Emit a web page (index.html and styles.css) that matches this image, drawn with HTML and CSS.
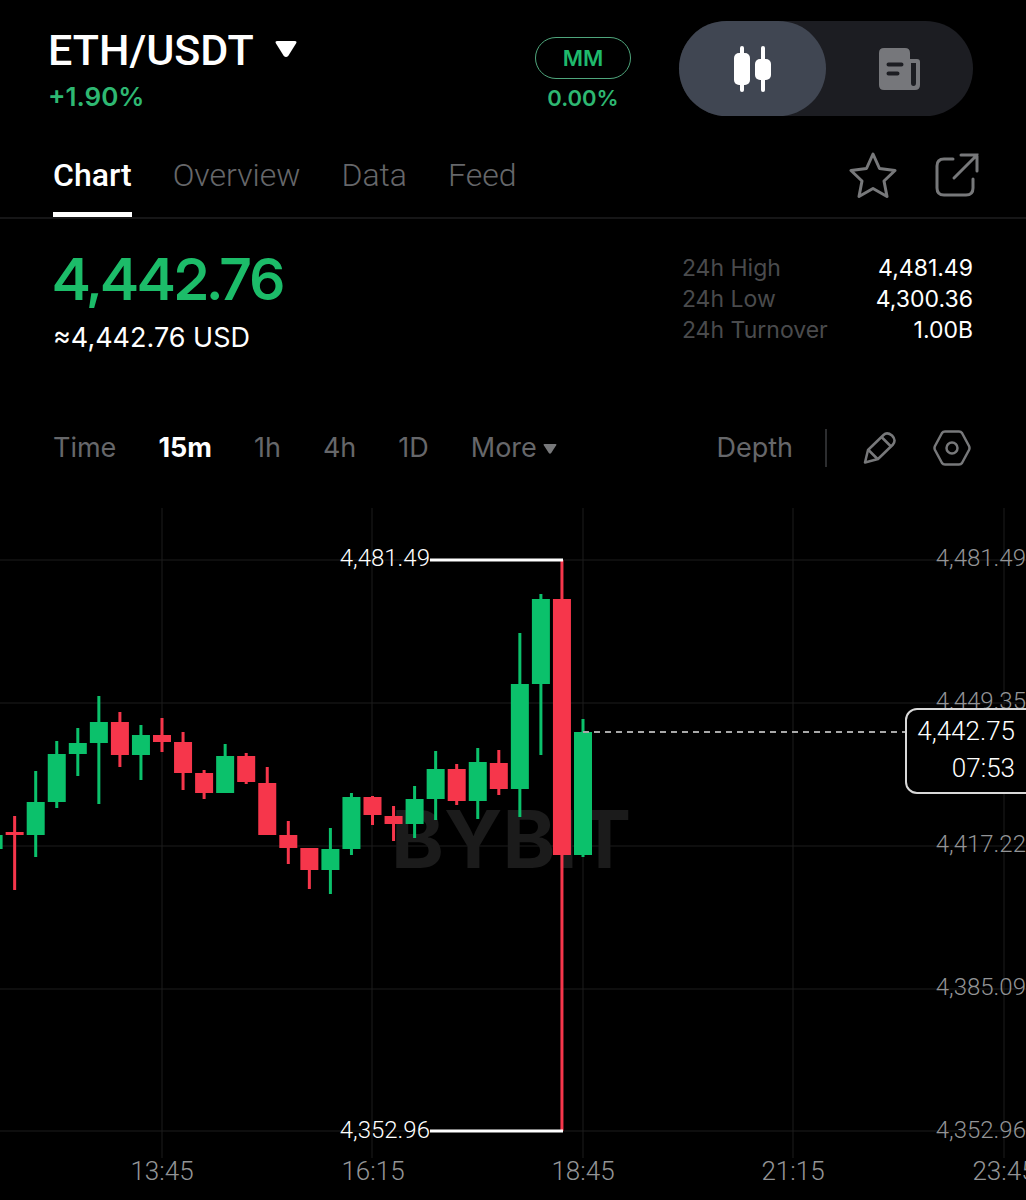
FILE: index.html
```
<!DOCTYPE html>
<html lang="en">

<head>
    <meta charset="UTF-8">
    <meta name="viewport" content="width=device-width, initial-scale=1.0">
    <title>ETH/USDT</title>
    <link rel="stylesheet" href="styles.css">
</head>

<body>
    <header class="top">
        <div class="pair">
            <button class="pair-name">ETH/USDT
                <svg width="22" height="20" viewBox="0 0 22 20"><path d="M2.500 1h17q3 0 1.500 2.500l-7.500 12q-2.500 3-5 0L1 3.500Q-.5 1 2.500 1z" fill="#fff"/></svg>
            </button>
            <div class="pair-change">+1.90%</div>
        </div>
        <div class="margin">
            <button class="mm">MM</button>
            <div class="mm-rate">0.00%</div>
        </div>
        <div class="switch">
            <button class="switch-item active" aria-label="Chart view">
                <svg width="38" height="46" viewBox="0 0 38 46" fill="#fff">
                    <rect x="6" y="0" width="4" height="46" rx="2"/>
                    <rect x="0" y="7" width="16" height="32" rx="5"/>
                    <rect x="27" y="0" width="4" height="46" rx="2"/>
                    <rect x="21" y="13" width="16" height="21" rx="5"/>
                </svg>
            </button>
            <button class="switch-item" aria-label="Order view">
                <svg width="42" height="44" viewBox="0 0 42 44">
                    <path d="M5 1h21q5 0 5 5v6h7q3 0 3 3v23q0 5-5 5H5q-5 0-5-5V6q0-5 5-5z" fill="#76777b"/>
                    <path d="M32 16h5v20q0 3-2.500 3T32 36z" fill="#1c1d22"/>
                    <path d="M9.500 17.500h13M9.500 26.500h9" stroke="#1c1d22" stroke-width="4" stroke-linecap="round"/>
                </svg>
            </button>
        </div>
    </header>

    <div class="tabs">
        <nav class="tabs-list">
            <a class="tab active" href="#chart">Chart</a>
            <a class="tab" href="#overview">Overview</a>
            <a class="tab" href="#data">Data</a>
            <a class="tab" href="#feed">Feed</a>
        </nav>
        <div class="tabs-icons">
            <button class="icon" aria-label="Favourite">
                <svg width="48" height="48" viewBox="0 0 48 48" fill="none" stroke="#77787a" stroke-width="3" stroke-linejoin="round">
                    <path d="M24 3l6.500 14.500 15.500 2-11 10.500 3 15.500L24 37.500 10 45.500l3-15.500L2 19.500l15.500-2z"/>
                </svg>
            </button>
            <button class="icon" aria-label="Share">
                <svg width="48" height="48" viewBox="0 0 48 48" fill="none" stroke="#77787a" stroke-width="3" stroke-linecap="round">
                    <path d="M20 8h-9q-7 0-7 7v22q0 7 7 7h22q7 0 7-7V28"/>
                    <path d="M28 4h16v16M44 4L21 27"/>
                </svg>
            </button>
        </div>
    </div>

    <section class="summary">
        <div>
            <div class="price">4,442.76</div>
            <div class="usd">≈4,442.76 USD</div>
        </div>
        <dl class="stats">
            <dt>24h High</dt>
            <dd>4,481.49</dd>
            <dt>24h Low</dt>
            <dd>4,300.36</dd>
            <dt>24h Turnover</dt>
            <dd>1.00B</dd>
        </dl>
    </section>

    <div class="tools">
        <div class="periods">
            <button class="period">Time</button>
            <button class="period active">15m</button>
            <button class="period">1h</button>
            <button class="period">4h</button>
            <button class="period">1D</button>
            <button class="period more">More
                <svg width="14" height="12" viewBox="0 0 14 12"><path d="M1.500 2h11q1.500 0 .7 1.300L8.200 11q-1.200 1.600-2.400 0L.8 3.300Q0 2 1.500 2z" fill="#77787a"/></svg>
            </button>
        </div>
        <div class="tools-right">
            <button class="period depth">Depth</button>
            <button class="icon" aria-label="Draw">
                <svg width="34" height="34" viewBox="0 0 34 34" fill="none" stroke="#77787a" stroke-width="2.500" stroke-linejoin="round">
                    <path d="M2 31.500L5 19 20.500 4Q24 0.500 29 4.500 33.500 9 30 13.500L15 28z"/>
                    <path d="M5.500 19l9 9M18.500 6l9.500 9.500"/>
                </svg>
            </button>
            <button class="icon" aria-label="Settings">
                <svg width="38" height="36" viewBox="0 0 38 36" fill="none" stroke="#77787a" stroke-width="2.500" stroke-linejoin="round">
                    <path d="M12 1.500h14q2 0 3 1.500l7 13q1 2 0 4l-7 13q-1 1.500-3 1.500H12q-2 0-3-1.500L2 20q-1-2 0-4L9 3q1-1.500 3-1.500z"/>
                    <circle cx="19" cy="18" r="5.500"/>
                </svg>
            </button>
        </div>
    </div>

    <svg class="chart" viewBox="0 500 1026 700" role="img" aria-label="ETH/USDT 15m candles">
        <g class="grid">
            <path d="M0 560h1026M0 703h1026M0 846h1026M0 989h1026M0 1131h1026"/>
            <path d="M162 508v650M372 508v650M583 508v650M793 508v650M1004 508v650"/>
        </g>
        <text class="watermark" x="391" y="868">BYBIT</text>
        <g class="candles"></g>
        <g class="extremes">
            <path d="M430 560h133M430 1131h133"/>
            <text x="430" y="566">4,481.49</text>
            <text x="430" y="1138">4,352.96</text>
        </g>
        <g class="prices">
            <text x="1026" y="566">4,481.49</text>
            <text x="1026" y="709">4,449.35</text>
            <text x="1026" y="852">4,417.22</text>
            <text x="1026" y="995">4,385.09</text>
            <text x="1026" y="1138">4,352.96</text>
        </g>
        <g class="times">
            <text x="162" y="1180">13:45</text>
            <text x="373" y="1180">16:15</text>
            <text x="583" y="1180">18:45</text>
            <text x="793" y="1180">21:15</text>
            <text x="1004" y="1180">23:45</text>
        </g>
        <g class="current">
            <path class="dash" d="M583 732h322"/>
            <rect x="906" y="709" width="140" height="84" rx="11"/>
            <text x="1015" y="740">4,442.75</text>
            <text x="1015" y="777">07:53</text>
        </g>
    </svg>

    <script src="chart.js"></script>
</body>

</html>
```

FILE: styles.css
```
body {
    margin: 0;
    background-color: #000;
    color: #fff;
    font-family: Inter, "Liberation Sans", sans-serif;
}

button {
    display: flex;
    align-items: center;
    justify-content: center;
    margin: 0;
    padding: 0;
    border: 0;
    background: none;
    color: inherit;
    font: inherit;
    cursor: pointer;
}

svg {
    display: block;
}

.top {
    display: flex;
    align-items: flex-start;
    padding: 21px 53px 0 48px;
}

.pair {
    flex: 1;
}

.pair-name {
    gap: 21px;
    font-family: Roboto, sans-serif;
    font-size: 43px;
    font-weight: 500;
    line-height: 58px;
}

.pair-change {
    color: #2eb872;
    font-size: 26px;
    font-weight: 600;
    line-height: 36px;
}

.margin {
    display: flex;
    flex-direction: column;
    align-items: center;
    margin-right: 48px;
    padding-top: 16px;
}

.mm {
    box-sizing: border-box;
    width: 96px;
    height: 42px;
    border: 1px solid #4fa67c;
    border-radius: 21px;
    color: #1fb96c;
    font-size: 22px;
    font-weight: 600;
}

.mm-rate {
    color: #2eb872;
    font-size: 22px;
    font-weight: 600;
    line-height: 38px;
}

.switch {
    display: flex;
    border-radius: 48px;
    background-color: #1c1d22;
}

.switch-item {
    width: 147px;
    height: 95px;
    border-radius: 48px;
}

.switch-item.active {
    background-color: #404652;
}

.tabs {
    display: flex;
    justify-content: space-between;
    padding: 34px 45px 0 53px;
    border-bottom: 2px solid #161617;
}

.tabs-list {
    display: flex;
    gap: 41px;
}

.tab {
    height: 61px;
    border-bottom: 5px solid transparent;
    color: #66676a;
    font-family: Roboto, sans-serif;
    font-size: 32px;
    font-weight: 300;
    line-height: 48px;
    text-decoration: none;
}

.tab.active {
    border-color: #fff;
    color: #fff;
    font-weight: 500;
}

.tabs-icons {
    display: flex;
    align-items: flex-start;
    gap: 36px;
}

.summary {
    display: flex;
    align-items: flex-start;
    justify-content: space-between;
    padding: 31px 53px 0;
}

.price {
    color: #1cbc69;
    font-family: "Inter Display", Inter, sans-serif;
    font-size: 57px;
    font-weight: 600;
    line-height: 60px;
}

.usd {
    font-size: 27px;
    line-height: 56px;
}

.stats {
    display: grid;
    grid-template-columns: auto auto;
    column-gap: 48px;
    margin: 3px 0 0;
    font-size: 23px;
    line-height: 31px;
}

.stats dt {
    color: #4a4b4d;
}

.stats dd {
    margin: 0;
    text-align: right;
}

.tools {
    display: flex;
    justify-content: space-between;
    padding: 63px 55px 33px 53px;
}

.periods,
.tools-right {
    display: flex;
    align-items: center;
    gap: 42px;
}

.tools-right {
    gap: 36px;
}

.period {
    color: #66676a;
    font-size: 27px;
    line-height: 38px;
}

.period.active {
    color: #fff;
    font-weight: 700;
}

.more {
    gap: 6px;
}

.depth {
    padding-right: 32px;
    border-right: 2px solid #2c2d2f;
}

.chart {
    width: 100%;
    height: auto;
    font-family: Roboto, sans-serif;
    font-size: 24px;
    font-weight: 300;
}

.grid path {
    stroke: #1c1c1d;
    stroke-width: 1;
}

.watermark {
    fill: #1b1b1b;
    font-family: Inter, sans-serif;
    font-size: 80px;
    font-weight: 700;
}

.up {
    fill: #0bc16b;
}

.down {
    fill: #f6364b;
}

.extremes,
.prices,
.current {
    text-anchor: end;
}

.extremes path {
    stroke: #fff;
    stroke-width: 3;
}

.extremes text,
.current text {
    fill: #fff;
}

.prices,
.times {
    fill: #939496;
}

.times {
    font-size: 26px;
    text-anchor: middle;
}

.current rect {
    fill: #000;
    stroke: #d8d8d8;
    stroke-width: 2;
}

.current text {
    font-size: 26px;
}

.dash {
    stroke: #a8a8a8;
    stroke-width: 2;
    stroke-dasharray: 6 5;
}
```

FILE: chart.js
```
// high, body top, body bottom, low, direction
let candles = [
    [835, 835, 849, 849, 'up'],
    [816, 832, 835, 890, 'down'],
    [771, 802, 835, 857, 'up'],
    [741, 754, 802, 808, 'up'],
    [728, 743, 754, 776, 'up'],
    [696, 722, 743, 804, 'up'],
    [712, 722, 755, 767, 'down'],
    [725, 735, 755, 780, 'up'],
    [718, 735, 742, 752, 'down'],
    [732, 742, 773, 790, 'down'],
    [770, 773, 793, 799, 'down'],
    [744, 756, 793, 793, 'up'],
    [753, 756, 782, 784, 'down'],
    [767, 783, 835, 835, 'down'],
    [821, 835, 848, 864, 'down'],
    [848, 848, 870, 889, 'down'],
    [828, 849, 870, 894, 'up'],
    [793, 797, 849, 855, 'up'],
    [796, 797, 815, 825, 'down'],
    [806, 816, 824, 841, 'down'],
    [786, 799, 824, 838, 'up'],
    [751, 769, 799, 820, 'up'],
    [764, 769, 801, 805, 'down'],
    [748, 762, 801, 819, 'up'],
    [750, 763, 789, 795, 'down'],
    [633, 684, 789, 817, 'up'],
    [594, 599, 684, 755, 'up'],
    [560, 599, 855, 1131, 'down'],
    [719, 732, 855, 857, 'up']
]

let step = 21.05
let lastX = 583
let group = document.querySelector('.candles')

function addRect(x, y, width, height, name) {
    let rect = document.createElementNS('http://www.w3.org/2000/svg', 'rect')
    rect.setAttribute('x', x - width / 2)
    rect.setAttribute('y', y)
    rect.setAttribute('width', width)
    rect.setAttribute('height', height)
    rect.setAttribute('class', name)
    group.append(rect)
}

candles.forEach(([high, top, bottom, low, name], i) => {
    let x = lastX - (candles.length - 1 - i) * step
    addRect(x, high, 3, low - high, name)
    addRect(x, top, 18, bottom - top, name)
})
```
